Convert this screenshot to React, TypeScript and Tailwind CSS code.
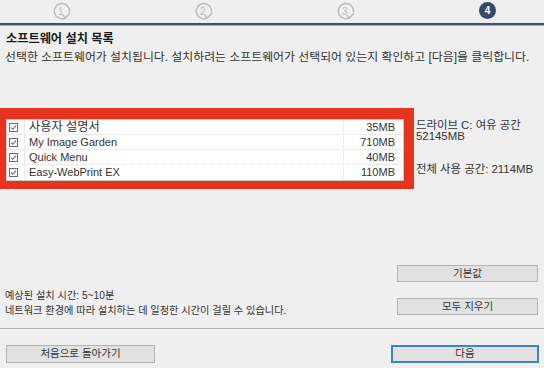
import React from 'react';

const font = '"Liberation Sans", "Noto Sans CJK KR", sans-serif';

const items = [
  { name: '사용자 설명서', size: '35MB', ko: true },
  { name: 'My Image Garden', size: '710MB' },
  { name: 'Quick Menu', size: '40MB' },
  { name: 'Easy-WebPrint EX', size: '110MB' },
];

const DoneStep: React.FC<{ n: number }> = ({ n }) => (
  <svg width="18" height="18" viewBox="0 0 18 18" fill="none">
    <path d="M12.4 15.9 A7.6 7.6 0 1 1 16.5 9.8" stroke="#bcbcbc" strokeWidth="1.5" strokeLinecap="round" />
    <path d="M10.2 13.4 L12.5 15.9 L16.6 11.4" stroke="#bcbcbc" strokeWidth="1.5" strokeLinecap="round" strokeLinejoin="round" />
    <text x="7.8" y="12.6" fontSize="10" textAnchor="middle" fill="#bcbcbc" fontFamily="Liberation Sans, sans-serif">
      {n}
    </text>
  </svg>
);

const Check: React.FC = () => (
  <svg width="9" height="9" viewBox="0 0 9 9" fill="none">
    <rect x="0.5" y="0.5" width="8" height="8" stroke="#6b6b6b" />
    <path d="M2 4.6 L3.8 6.3 L7 2.6" stroke="#6b6b6b" strokeWidth="1.1" />
  </svg>
);

const Button: React.FC<{ label: string; primary?: boolean; className?: string }> = ({ label, primary, className }) => (
  <button
    className={`flex items-center justify-center bg-[#e1e1e1] text-[10.5px] text-[#333] ${
      primary ? 'border-2 border-[#3c82d0]' : 'border border-[#b4b4b4]'
    } ${className ?? ''}`}
  >
    {label}
  </button>
);

export default function App() {
  return (
    <div className="w-[544px] h-[368px] bg-[#efefef] flex flex-col overflow-hidden" style={{ fontFamily: font }}>
      {/* step indicator */}
      <div className="h-[23px] flex items-start pt-[2px] pl-[53px] gap-[124px]">
        <DoneStep n={1} />
        <DoneStep n={2} />
        <DoneStep n={3} />
        <div className="w-[17px] h-[17px] rounded-full bg-[#354a6b] flex items-center justify-center text-white text-[10px] font-bold">
          4
        </div>
      </div>
      <div className="h-[2px] bg-[#3e4f6b]" />
      <div className="h-px bg-[#a3aebd]" />

      <h1 className="mt-[6px] px-[6px] text-[12.2px] leading-[15px] font-bold text-[#1b1b1b]">소프트웨어 설치 목록</h1>
      <p className="mt-[3px] px-[5px] text-[11.9px] leading-[14px] text-[#333] whitespace-nowrap">
        선택한 소프트웨어가 설치됩니다. 설치하려는 소프트웨어가 선택되어 있는지 확인하고 [다음]을 클릭합니다.
      </p>

      <div className="mt-[44px] flex">
        <div className="w-[414px] border-l-[6px] border-r-[10px] border-t-[11px] border-b-[8px] border-[#e8341e]">
          <div className="bg-white border border-[#c9c9c9]">
            {items.map((it, i) => (
              <div
                key={it.name}
                className={`h-[15px] flex items-center text-[11px] text-[#333] ${
                  i < items.length - 1 ? 'border-b border-dotted border-[#dcdcdc]' : ''
                }`}
              >
                <div className="w-[18px] h-full flex items-center pl-[2px] border-r border-[#ececec]">
                  <Check />
                </div>
                <div
                  className={`flex-1 pl-[4px] h-full flex items-center border-r border-[#ececec] ${
                    it.ko ? 'text-[12.2px]' : ''
                  }`}
                >
                  {it.name}
                </div>
                <div className="w-[59px] pr-[8px] text-right">{it.size}</div>
              </div>
            ))}
          </div>
        </div>
        <div className="ml-[2px] pt-[12px] text-[11.4px] leading-[11px] text-[#333] whitespace-nowrap">
          <div>드라이브 C: 여유 공간</div>
          <div>52145MB</div>
          <div className="mt-[22px]">전체 사용 공간: 2114MB</div>
        </div>
      </div>

      <div className="mt-[76px] h-[50px] flex justify-between pl-[5px] pr-[6px]">
        <div className="pt-[23px] text-[10.2px] leading-[15px] text-[#333]">
          <div>예상된 설치 시간: 5~10분</div>
          <div>네트워크 환경에 따라 설치하는 데 일정한 시간이 걸릴 수 있습니다.</div>
        </div>
        <div className="flex flex-col gap-[16px]">
          <Button label="기본값" className="w-[141px] h-[17px]" />
          <Button label="모두 지우기" className="w-[141px] h-[17px]" />
        </div>
      </div>

      <div className="mt-[13px] h-px bg-[#b0b0b0]" />

      <div className="mt-[16px] flex justify-between pl-[6px] pr-[5px]">
        <Button label="처음으로 돌아가기" className="w-[149px] h-[18px]" />
        <Button label="다음" primary className="w-[148px] h-[18px]" />
      </div>
    </div>
  );
}
